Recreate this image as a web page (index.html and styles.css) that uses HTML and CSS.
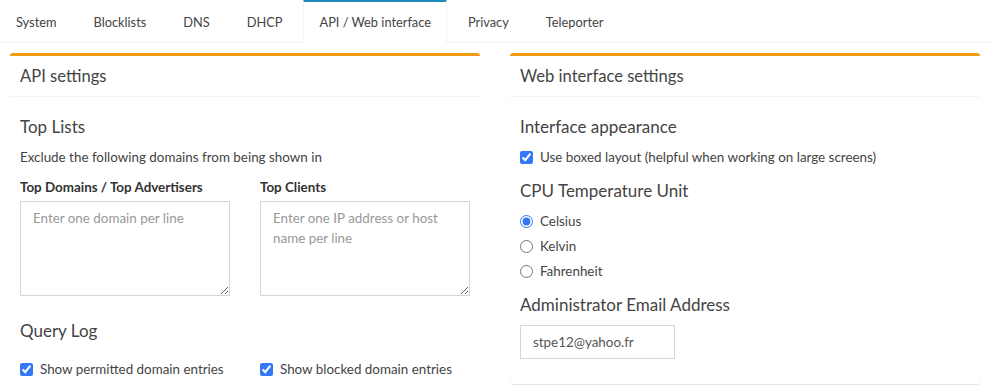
FILE: index.html
```html
<!DOCTYPE html>
<html lang="en">
<head>
  <meta charset="UTF-8">
  <meta name="viewport" content="width=device-width, initial-scale=1.0">
  <title>Settings - API / Web interface</title>
  <link rel="stylesheet" href="styles.css">
</head>
<body>
  <div class="nav-tabs-custom">
    <!-- Tabs -->
    <ul class="nav-tabs">
      <li><a href="#">System</a></li>
      <li><a href="#">Blocklists</a></li>
      <li><a href="#">DNS</a></li>
      <li><a href="#">DHCP</a></li>
      <li class="active"><a href="#">API / Web interface</a></li>
      <li><a href="#">Privacy</a></li>
      <li><a href="#">Teleporter</a></li>
    </ul>

    <div class="tab-content">
      <div class="row">
        <!-- API settings -->
        <div class="box">
          <div class="box-header">
            <h3 class="box-title">API settings</h3>
          </div>
          <div class="box-body">
            <h4>Top Lists</h4>
            <p>Exclude the following domains from being shown in</p>
            <div class="two-cols">
              <div class="form-group">
                <label>Top Domains / Top Advertisers</label>
                <textarea class="form-control" placeholder="Enter one domain per line"></textarea>
              </div>
              <div class="form-group">
                <label>Top Clients</label>
                <textarea class="form-control" placeholder="Enter one IP address or host name per line"></textarea>
              </div>
            </div>
            <h4>Query Log</h4>
            <div class="two-cols checks">
              <label class="check"><input type="checkbox" checked> Show permitted domain entries</label>
              <label class="check"><input type="checkbox" checked> Show blocked domain entries</label>
            </div>
          </div>
        </div>

        <!-- Web interface settings -->
        <div class="box">
          <div class="box-header">
            <h3 class="box-title">Web interface settings</h3>
          </div>
          <div class="box-body">
            <h4>Interface appearance</h4>
            <label class="check boxed"><input type="checkbox" checked> Use boxed layout (helpful when working on large screens)</label>
            <h4>CPU Temperature Unit</h4>
            <div class="radios">
              <label class="check"><input type="radio" name="temp" checked> Celsius</label>
              <label class="check"><input type="radio" name="temp"> Kelvin</label>
              <label class="check"><input type="radio" name="temp"> Fahrenheit</label>
            </div>
            <h4>Administrator Email Address</h4>
            <div class="form-group">
              <input type="email" class="form-control email" value="stpe12@yahoo.fr">
            </div>
          </div>
        </div>
      </div>
    </div>
  </div>
</body>
</html>
```

FILE: styles.css
```css
body {
  font-family: Lato, "Open Sans", sans-serif;
  font-size: 13.4px;
  line-height: 20px;
  color: #333;
  margin: 0;
  padding: 0;
  background: #fff;
}
.nav-tabs-custom {
  background: #fff;
}
.nav-tabs {
  list-style: none;
  margin: 0;
  padding: 0;
  display: flex;
  border-bottom: 1px solid #f4f4f4;
  height: 42px;
}
.nav-tabs li {
  margin-right: 5px;
  margin-bottom: -1px;
}
.nav-tabs li a {
  display: block;
  padding: 10px 15px 11px;
  color: #444;
  font-size: 12.8px;
  text-decoration: none;
  border-top: 3px solid transparent;
  border-left: 1px solid transparent;
  border-right: 1px solid transparent;
  height: 20px;
  line-height: 20px;
  margin-top: -1px;
}
.nav-tabs li.active a {
  border-top-color: #1f8ac0;
  border-left-color: #f4f4f4;
  border-right-color: #f4f4f4;
  background: #fff;
}
.tab-content {
  padding: 10px;
}
.row {
  display: grid;
  grid-template-columns: 470px 470px;
  gap: 30px;
  align-items: start;
}
.box {
  background: #fff;
  border-top: 3px solid #f39c12;
  border-radius: 3px;
  box-shadow: 0 1px 1px rgba(0, 0, 0, 0.1);
}
.box-header {
  padding: 10px;
  border-bottom: 1px solid #f4f4f4;
}
.box-title {
  margin: 0;
  font-size: 16.6px;
  font-weight: normal;
  line-height: 20px;
  color: #444;
}
.box-body {
  padding: 10px;
}
h4 {
  font-size: 17px;
  font-weight: normal;
  line-height: 20px;
  margin: 10px 0;
  color: #444;
}
p {
  margin: 0 0 10px;
  color: #444;
}
.two-cols {
  display: grid;
  grid-template-columns: 210px 210px;
  gap: 30px;
}
.form-group {
  margin-bottom: 15px;
}
.form-group label {
  display: block;
  font-weight: bold;
  margin-bottom: 4px;
}
.form-control {
  box-sizing: border-box;
  display: block;
  width: 100%;
  border: 1px solid #d2d6de;
  border-radius: 0;
  padding: 6px 12px;
  font-family: inherit;
  font-size: 13.4px;
  line-height: 20px;
  color: #555;
}
textarea.form-control {
  height: 95px;
  resize: vertical;
}
.form-control::placeholder {
  color: #999;
}
.email {
  width: 155px;
  height: 34px;
}
.check {
  display: flex;
  align-items: center;
  gap: 7px;
  color: #444;
  height: 20px;
  white-space: nowrap;
}
.check input {
  margin: 0;
  width: 13px;
  height: 13px;
  accent-color: #3478f6;
}
.checks {
  margin-top: 18px;
  margin-bottom: 15px;
}
.boxed {
  margin-bottom: 14px;
}
.radios {
  display: flex;
  flex-direction: column;
  gap: 5px;
  margin-bottom: 14px;
}
```
